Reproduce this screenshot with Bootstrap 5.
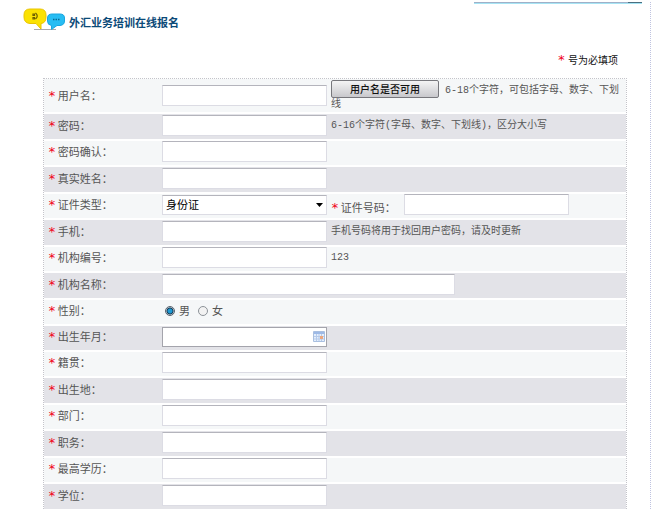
<!DOCTYPE html>
<html lang="zh-CN">
<head>
<meta charset="utf-8">
<meta name="viewport" content="width=device-width, initial-scale=1">
<title>外汇业务培训在线报名</title>
<link href="https://cdn.jsdelivr.net/npm/bootstrap@5.3.0/dist/css/bootstrap.min.css" rel="stylesheet">
<style>
body { font-family: "Liberation Sans", "Noto Sans CJK SC", sans-serif; font-size: 11px; line-height: 14px; color: #555; background: #fff; }
.page-frame { margin: 2px 3px 0 0; border-right: 1px dotted #bfc3e0; }
.top-rule { height: 2px; margin: 0 8px 0 474px; border-top: 1px solid #9fb0c8; border-bottom: 1px solid #a6e4f4; }
.top-rule span { width: 14px; height: 1px; margin-top: -1px; background: #4a6f80; }
.page-head { padding: 4px 0 0 23px; }
.page-head h1 { font-size: 11px; line-height: 16px; font-weight: 700; color: #0b4a78; margin: 7px 0 0 3px; }
.need-note { font-size: 10px; color: #111; padding: 22px 32px 10px 0; }
.star { color: #f00018; font-family: "DejaVu Sans Mono", monospace; font-size: 13px; font-weight: 400; line-height: 12px; }
.form-wrap { padding: 0 23px 0 43px; }
.reg-form { border: 1px dotted #c4c4ca; border-bottom: 0; table-layout: fixed; border-collapse: separate; border-spacing: 0; }
.reg-form th, .reg-form td { background: #f5f7f8; border: solid #fff; border-width: 2px 0; padding: 0 0 3px; vertical-align: middle; font-weight: 400; }
.reg-form tr:nth-child(even) > * { background: #e3e3e8; border-width: 0; padding-top: 1px; }
.reg-form tr:first-child > * { border-top: 0; height: 35px; padding: 0; }
.reg-form th { padding-left: 4px !important; }
.reg-form th label, .reg-form th .caption-text { margin-left: 2px; }
.col-label { width: 118px; }
.col-field { width: 169px; }
.hint { font-family: "Liberation Mono", "Noto Sans CJK SC", monospace; font-size: 10px; line-height: 14px; }
.box { display: block; width: 165px; height: 21px; padding: 0 4px; border: 1px solid #dcdce4; border-top-color: #b4b4bc; border-radius: 0; background-color: #fff; color: #000; font-size: 11px; line-height: 16px; }
.box-wide { width: 293px; }
.box-date { height: 20px; border: 1px solid #a4a4ac; }
.date-wrap { width: 165px; }
.date-wrap svg { position: absolute; right: 2px; top: 4px; }
select.box { height: 20px; padding: 0 3px; appearance: none; background: #fff url("data:image/svg+xml,%3Csvg xmlns='http://www.w3.org/2000/svg' width='7' height='4'%3E%3Cpath d='M0 0h7L3.500 4z'/%3E%3C/svg%3E") no-repeat right 3px center; }
.check-btn { width: 108px; height: 18px; padding: 0; border: 1px solid #77777c; border-radius: 2px; background: linear-gradient(#f4f4f4, #dedee0 50%, #c8c8cc); color: #111; font-size: 10px; line-height: 14px; font-weight: 500; font-family: "Noto Sans CJK SC", sans-serif; }
.dot-radio { appearance: none; width: 10px; height: 10px; margin: 0; border: 1px solid #8c9298; border-radius: 50%; background: #f2f2f2; }
.dot-radio:checked { border-color: #56626e; background: radial-gradient(circle, #1f9ad4 0 2px, #12354f 3px, #e4eaf0 4px); }
.gender { height: 21px; padding-left: 3px; }
.id-label { padding-top: 7px; }
.id-label label { margin-left: 2px; }
</style>
</head>
<body>
<div class="page-frame">
  <div class="top-rule d-flex justify-content-end"><span></span></div>
  <header class="page-head d-flex align-items-start">
    <svg width="43" height="24" viewBox="0 0 43 24" aria-hidden="true">
      <path d="M11 21.500H33" stroke="#aaa" stroke-width="1"/>
      <path d="M7 1H17Q23 1 23 7V9Q23 15 18 15.500L18 21L13 15.500H7Q1 15 1 9V7Q1 1 7 1Z" fill="#fbe203" stroke="#e9c400"/>
      <path d="M29 6H37Q41.500 6 41.500 10V13Q41.500 17 37 17.500H34L28.500 21.500V17.500Q24.500 17 24.500 13V10Q24.500 6 29 6Z" fill="#27bdf3" stroke="#1aa6e0"/>
      <path d="M10 6h1.500v1.500H10zM10 9.500h1.500V11H10zM12.500 5Q16 8 12.500 11" fill="none" stroke="#6b5d00" stroke-width="1.200"/>
      <path d="M30 11.500h1.500M32.500 11.500H34M35 11.500h1.500" stroke="#086994" stroke-width="1.300"/>
    </svg>
    <h1>外汇业务培训在线报名</h1>
  </header>
  <div class="need-note text-end"><span class="star">*</span> 号为必填项</div>
  <form class="form-wrap">
    <table class="reg-form w-100">
      <colgroup><col class="col-label"><col class="col-field"><col></colgroup>
      <tbody>
        <tr><th scope="row"><span class="star">*</span><label for="user">用户名：</label></th><td><input class="box" id="user" type="text"></td><td class="hint"><button type="button" class="check-btn">用户名是否可用</button> 6-18个字符，可包括字母、数字、下划线</td></tr>
        <tr><th scope="row"><span class="star">*</span><label for="pw">密码：</label></th><td><input class="box" id="pw" type="password"></td><td class="hint">6-16个字符(字母、数字、下划线)，区分大小写</td></tr>
        <tr><th scope="row"><span class="star">*</span><label for="pw2">密码确认：</label></th><td><input class="box" id="pw2" type="password"></td><td></td></tr>
        <tr><th scope="row"><span class="star">*</span><label for="name">真实姓名：</label></th><td><input class="box" id="name" type="text"></td><td></td></tr>
        <tr><th scope="row"><span class="star">*</span><label for="idtype">证件类型：</label></th><td><select class="box" id="idtype"><option>身份证</option></select></td><td><div class="d-flex"><div class="id-label"><span class="star">*</span><label for="idno">证件号码：</label></div><input class="box ms-2" id="idno" type="text"></div></td></tr>
        <tr><th scope="row"><span class="star">*</span><label for="mobile">手机：</label></th><td><input class="box" id="mobile" type="text"></td><td class="hint">手机号码将用于找回用户密码，请及时更新</td></tr>
        <tr><th scope="row"><span class="star">*</span><label for="orgno">机构编号：</label></th><td><input class="box" id="orgno" type="text"></td><td class="hint">123</td></tr>
        <tr><th scope="row"><span class="star">*</span><label for="orgname">机构名称：</label></th><td colspan="2"><input class="box box-wide" id="orgname" type="text"></td></tr>
        <tr><th scope="row"><span class="star">*</span><span class="caption-text">性别：</span></th><td><div class="gender d-flex align-items-center gap-1"><input class="dot-radio" type="radio" name="sex" id="male" checked><label for="male">男</label><input class="dot-radio ms-1" type="radio" name="sex" id="female"><label for="female">女</label></div></td><td></td></tr>
        <tr><th scope="row"><span class="star">*</span><label for="birth">出生年月：</label></th><td><div class="date-wrap position-relative"><input class="box box-date" id="birth" type="text">
          <svg width="12" height="11" viewBox="0 0 12 11" aria-hidden="true"><path d="M.5.5h11v10H.5z" fill="#e4eefb" stroke="#a9bfe0"/><path d="M1 1h10v2H1z" fill="#9db9e6"/><path d="M1 5.500h10M1 8h10M3.500 3v7M6 3v7M8.500 3v7" stroke="#b5caea"/><path d="M7 5h3v3H7z" fill="#eba77f"/></svg></div></td><td></td></tr>
        <tr><th scope="row"><span class="star">*</span><label for="native">籍贯：</label></th><td><input class="box" id="native" type="text"></td><td></td></tr>
        <tr><th scope="row"><span class="star">*</span><label for="place">出生地：</label></th><td><input class="box" id="place" type="text"></td><td></td></tr>
        <tr><th scope="row"><span class="star">*</span><label for="dept">部门：</label></th><td><input class="box" id="dept" type="text"></td><td></td></tr>
        <tr><th scope="row"><span class="star">*</span><label for="job">职务：</label></th><td><input class="box" id="job" type="text"></td><td></td></tr>
        <tr><th scope="row"><span class="star">*</span><label for="edu">最高学历：</label></th><td><input class="box" id="edu" type="text"></td><td></td></tr>
        <tr><th scope="row"><span class="star">*</span><label for="degree">学位：</label></th><td><input class="box" id="degree" type="text"></td><td></td></tr>
      </tbody>
    </table>
  </form>
</div>
<script src="https://cdn.jsdelivr.net/npm/bootstrap@5.3.0/dist/js/bootstrap.bundle.min.js"></script>
</body>
</html>
